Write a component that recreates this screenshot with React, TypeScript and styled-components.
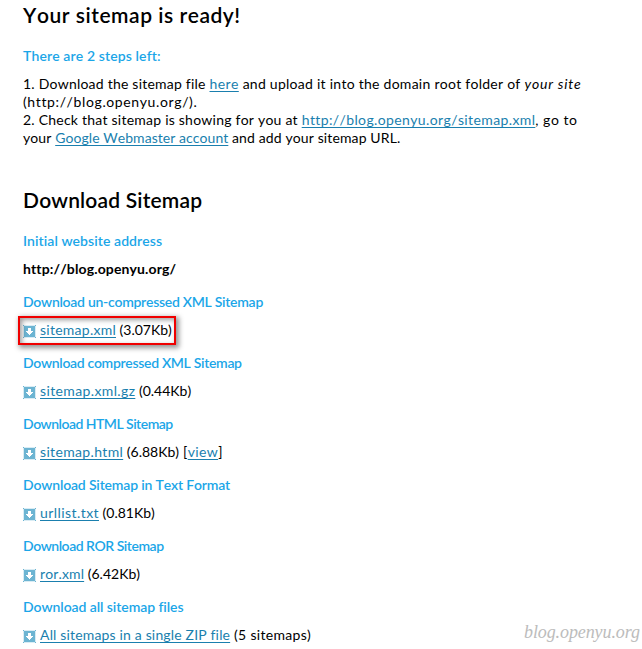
import React from 'react';
import styled, { createGlobalStyle, css } from 'styled-components';

const GlobalStyle = createGlobalStyle`
  body { margin: 0; background: #fff; }
  * { box-sizing: border-box; }
`;

const Page = styled.main`
  position: relative;
  height: 649px;
  padding: 2px 23px 0;
  overflow: hidden;
  color: #000;
  font: 14px/18px Lato, 'Open Sans', sans-serif;
  font-kerning: none;
  white-space: pre;
`;

const Title = styled.h1<{ $track: number }>`
  margin: 0 0 19px;
  font-size: 21px;
  line-height: 26px;
  font-weight: 600;
  letter-spacing: ${(p) => p.$track}px;
`;

const Heading = styled.h2<{ $track: number }>`
  margin: 0 0 10px;
  font-size: 14px;
  line-height: 18px;
  font-weight: 600;
  color: #1ba6e8;
  letter-spacing: ${(p) => p.$track}px;
`;

const Steps = styled.div`
  margin-bottom: 40px;
`;

const Text = styled.span<{ $track: number }>`
  letter-spacing: ${(p) => p.$track}px;
`;

const Emphasis = styled.em<{ $track: number }>`
  letter-spacing: ${(p) => p.$track}px;
`;

const Link = styled.a<{ $track: number }>`
  color: #1a7fae;
  letter-spacing: ${(p) => p.$track}px;
  text-decoration: underline;
  text-decoration-thickness: 1px;
  text-underline-offset: 2px;
  text-decoration-skip-ink: none;
`;

const Address = styled.div`
  margin-bottom: 15px;
  font-weight: 700;
  letter-spacing: 0.13px;
`;

const Section = styled.section`
  margin-bottom: 15px;
`;

const FileRow = styled.div<{ $highlighted?: boolean }>`
  position: relative;
  display: flex;
  width: max-content;
  height: 18px;
  ${(p) =>
    p.$highlighted &&
    css`
      &::after {
        content: '';
        position: absolute;
        inset: -5px -4px -6px -5px;
        border: 2px solid #f00000;
        box-shadow: 2px 2px 5px 1px rgba(0, 0, 0, 0.42), inset 2px 2px 5px rgba(0, 0, 0, 0.38);
      }
    `}
`;

const Icon = styled.svg`
  flex: none;
  width: 13px;
  height: 13px;
  margin: 4px 4px 0 0;
`;

const Watermark = styled.div`
  position: absolute;
  left: 524px;
  top: 621px;
  color: #bcbcbc;
  font: italic 400 18px/22px 'Liberation Serif', serif;
  letter-spacing: -0.1px;
`;

const DownloadIcon = () => (
  <Icon viewBox="0 0 13 13" shapeRendering="crispEdges" aria-hidden="true">
    <path fill="#d9ecf4" d="M0 0h13v13H0z" />
    <path fill="#6cb4d2" d="M1 1h11v11H1zM0 0h1v1H0zM12 0h1v1h-1zM0 12h1v1H0zM12 12h1v1h-1z" />
    <path fill="#fff" d="M5 3h3v3h2v1H9v1H8v1H7v1H6V9H5V8H4V7H3V6h2z" />
  </Icon>
);

interface FileEntry {
  heading: string;
  headingTrack: number;
  name: string;
  nameTrack: number;
  note: string;
  noteTrack: number;
  view?: boolean;
  highlighted?: boolean;
}

const files: FileEntry[] = [
  { heading: 'Download un-compressed XML Sitemap', headingTrack: -0.28, name: 'sitemap.xml', nameTrack: 0.25, note: ' (3.07Kb)', noteTrack: 0.0, highlighted: true },
  { heading: 'Download compressed XML Sitemap', headingTrack: -0.32, name: 'sitemap.xml.gz', nameTrack: 0.37, note: ' (0.44Kb)', noteTrack: 0.0 },
  { heading: 'Download HTML Sitemap', headingTrack: -0.52, name: 'sitemap.html', nameTrack: 0.34, note: ' (6.88Kb)', noteTrack: 0.0, view: true },
  { heading: 'Download Sitemap in Text Format', headingTrack: -0.17, name: 'urllist.txt', nameTrack: 0.43, note: ' (0.81Kb)', noteTrack: 0.0 },
  { heading: 'Download ROR Sitemap', headingTrack: -0.48, name: 'ror.xml', nameTrack: 0.13, note: ' (6.42Kb)', noteTrack: 0.0 },
  { heading: 'Download all sitemap files', headingTrack: -0.07, name: 'All sitemaps in a single ZIP file', nameTrack: 0.16, note: ' (5 sitemaps)', noteTrack: 0.3 },
];

export default function App() {
  return (
    <Page>
      <GlobalStyle />
      <Title $track={0.53}>Your sitemap is ready!</Title>
      <Heading $track={0.11}>There are 2 steps left:</Heading>
      <Steps>
        <div>
          <Text $track={0.22}>1. Download the sitemap file </Text>
          <Link $track={0.4}>here</Link>
          <Text $track={0.26}> and upload it into the domain root folder of </Text>
          <Emphasis $track={0.79}>your site</Emphasis>
        </div>
        <div>
          <Text $track={0.62}>(http://blog.openyu.org/).</Text>
        </div>
        <div>
          <Text $track={0.23}>2. Check that sitemap is showing for you at </Text>
          <Link $track={0.38}>http://blog.openyu.org/sitemap.xml</Link>
          <Text $track={0.5}>, go to</Text>
        </div>
        <div>
          <Text $track={0.11}>your </Text>
          <Link $track={0.05}>Google Webmaster account</Link>
          <Text $track={0.12}> and add your sitemap URL.</Text>
        </div>
      </Steps>
      <Title $track={0.17}>Download Sitemap</Title>
      <Heading $track={0.07}>Initial website address</Heading>
      <Address>http://blog.openyu.org/</Address>
      {files.map((f) => (
        <Section key={f.name}>
          <Heading $track={f.headingTrack}>{f.heading}</Heading>
          <FileRow $highlighted={f.highlighted}>
            <DownloadIcon />
            <Link $track={f.nameTrack}>{f.name}</Link>
            <Text $track={f.noteTrack}>{f.note}</Text>
            {f.view && (
              <>
                <Text $track={0.4}>{' ['}</Text>
                <Link $track={0.37}>view</Link>
                <Text $track={0}>]</Text>
              </>
            )}
          </FileRow>
        </Section>
      ))}
      <Watermark>blog.openyu.org</Watermark>
    </Page>
  );
}
